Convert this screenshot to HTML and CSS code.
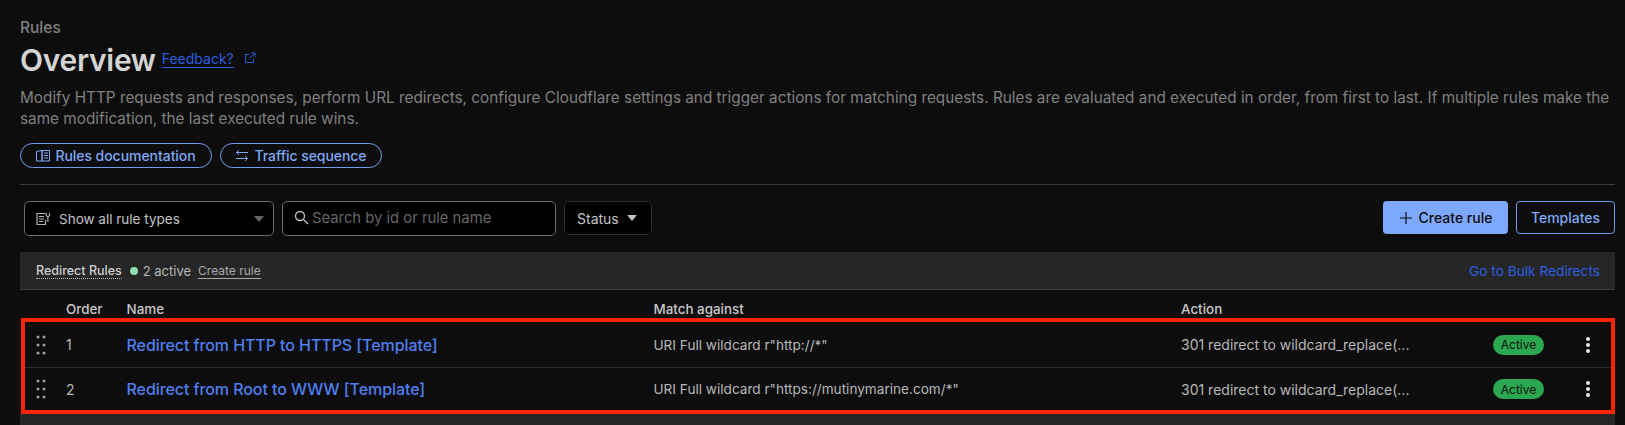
FILE: index.html
```html
<!DOCTYPE html>
<html lang="en">
<head>
  <meta charset="UTF-8">
  <meta name="viewport" content="width=device-width, initial-scale=1.0">
  <title>Rules Overview</title>
  <link rel="stylesheet" href="styles.css">
</head>
<body>
  <div class="container">
    <div class="crumb">Rules</div>
    <div class="title-row">
      <h1>Overview</h1>
      <a class="feedback" href="#">Feedback?</a>
      <svg class="ext-icon" width="12" height="12" viewBox="0 0 12 12" fill="none" stroke="currentColor" stroke-width="1">
        <path d="M5 2.5H1.5V10.5H9.5V7"/>
        <path d="M7 1H11V5M11 1L5.5 6.5"/>
      </svg>
    </div>
    <p class="intro">Modify HTTP requests and responses, perform URL redirects, configure Cloudflare settings and trigger actions for matching requests. Rules are evaluated and executed in order, from first to last. If multiple rules make the same modification, the last executed rule wins.</p>

    <div class="pills">
      <a class="pill pill-docs" href="#">
        <svg width="14" height="13" viewBox="0 0 14 13" fill="none" stroke="currentColor" stroke-width="1">
          <path d="M.5 2.5L6 1.5V12L.5 12ZM6 1.5H13.5V12H6Z"/>
          <path d="M8 4H12M8 6.5H12M8 9H12"/>
        </svg>
        Rules documentation
      </a>
      <a class="pill pill-traffic" href="#">
        <svg width="14" height="13" viewBox="0 0 14 13" fill="none" stroke="currentColor" stroke-width="1">
          <path d="M13 3.5H1.5M4 1L1.5 3.5L4 6"/>
          <path d="M1 9.5H12.5M10 7L12.5 9.5L10 12"/>
        </svg>
        Traffic sequence
      </a>
    </div>

    <hr class="divider">

    <div class="toolbar">
      <div class="select">
        <svg width="15" height="14" viewBox="0 0 15 14" fill="none" stroke="currentColor" stroke-width="1.2">
          <path d="M9.5 1.5H1V12.5H9.5V8"/>
          <path d="M3 4.5H8M3 7H8M3 9.5H7"/>
          <path d="M10.3 1V3.6L11.9 5L13.5 3.6V1M11.9 5V10"/>
        </svg>
        <span class="select-text">Show all rule types</span>
        <span class="caret caret-dim"></span>
      </div>
      <div class="search">
        <svg width="15" height="15" viewBox="0 0 15 15" fill="none" stroke="currentColor" stroke-width="1.3">
          <circle cx="6" cy="6" r="4.5"/>
          <path d="M9.5 9.5L14 14"/>
        </svg>
        <span>Search by id or rule name</span>
      </div>
      <div class="status">
        Status
        <span class="caret"></span>
      </div>
      <div class="toolbar-right">
        <a class="btn btn-primary" href="#">
          <svg width="14" height="14" viewBox="0 0 14 14" stroke="currentColor" stroke-width="1.2">
            <path d="M7 1V13M1 7H13"/>
          </svg>
          Create rule
        </a>
        <a class="btn btn-outline" href="#">Templates</a>
      </div>
    </div>

    <div class="section-head">
      <span class="section-name">Redirect Rules</span>
      <span class="dot"></span>
      <span class="section-count">2 active</span>
      <a class="section-create" href="#">Create rule</a>
      <a class="bulk-link" href="#">Go to Bulk Redirects</a>
    </div>

    <div class="grid-row table-head">
      <span></span>
      <span>Order</span>
      <span>Name</span>
      <span>Match against</span>
      <span>Action</span>
    </div>

    <div class="highlight">
      <div class="grid-row rule">
        <svg class="drag" width="10" height="20" viewBox="0 0 10 20" fill="currentColor">
          <circle cx="2" cy="2" r="1.5"/><circle cx="8" cy="2" r="1.5"/>
          <circle cx="2" cy="10" r="1.5"/><circle cx="8" cy="10" r="1.5"/>
          <circle cx="2" cy="18" r="1.5"/><circle cx="8" cy="18" r="1.5"/>
        </svg>
        <span>1</span>
        <a class="rule-name" href="#">Redirect from HTTP to HTTPS [Template]</a>
        <span class="match">URI Full wildcard r"http://*"</span>
        <span>301 redirect to wildcard_replace(...</span>
        <span class="badge">Active</span>
        <svg class="more" width="6" height="18" viewBox="0 0 6 18" fill="currentColor">
          <circle cx="3" cy="3" r="2"/><circle cx="3" cy="9" r="2"/><circle cx="3" cy="15" r="2"/>
        </svg>
      </div>
      <div class="grid-row rule">
        <svg class="drag" width="10" height="20" viewBox="0 0 10 20" fill="currentColor">
          <circle cx="2" cy="2" r="1.5"/><circle cx="8" cy="2" r="1.5"/>
          <circle cx="2" cy="10" r="1.5"/><circle cx="8" cy="10" r="1.5"/>
          <circle cx="2" cy="18" r="1.5"/><circle cx="8" cy="18" r="1.5"/>
        </svg>
        <span>2</span>
        <a class="rule-name" href="#">Redirect from Root to WWW [Template]</a>
        <span class="match">URI Full wildcard r"https://mutinymarine.com/*"</span>
        <span>301 redirect to wildcard_replace(...</span>
        <span class="badge">Active</span>
        <svg class="more" width="6" height="18" viewBox="0 0 6 18" fill="currentColor">
          <circle cx="3" cy="3" r="2"/><circle cx="3" cy="9" r="2"/><circle cx="3" cy="15" r="2"/>
        </svg>
      </div>
    </div>
    <div class="section-foot"></div>
  </div>
</body>
</html>
```

FILE: styles.css
```css
body {
  font-family: Inter, "Liberation Sans", sans-serif;
  margin: 0;
  padding: 0;
  background-color: #0d0d0d;
  color: #d9d9d9;
  overflow: hidden;
}
a {
  text-decoration: none;
}
.container {
  padding: 19px 10px 0 20px;
}
.crumb {
  font-size: 15.5px;
  line-height: 17px;
  font-weight: 500;
  color: #808080;
}
.title-row {
  display: flex;
  align-items: center;
  height: 42px;
  margin-top: 3px;
}
h1 {
  margin: 0;
  font-size: 30px;
  font-weight: 600;
  letter-spacing: -0.3px;
  color: #d4d4d4;
}
.feedback {
  margin-left: 6px;
  font-size: 14px;
  line-height: 17px;
  color: #2c5ee0;
  border-bottom: 1px solid #2c5ee0;
  position: relative;
  top: -1px;
}
.ext-icon {
  margin-left: 10px;
  color: #2c5ee0;
  position: relative;
  top: -2px;
}
.intro {
  margin: 6px 0 0;
  font-size: 15.32px;
  line-height: 21px;
  color: #808080;
}
.pills {
  display: flex;
  gap: 8px;
  margin-top: 14px;
}
.pill {
  display: flex;
  align-items: center;
  justify-content: center;
  gap: 5px;
  height: 25px;
  box-sizing: border-box;
  border: 1px solid #6d9eed;
  border-radius: 13px;
  font-size: 14px;
  font-weight: 500;
  letter-spacing: -0.05px;
  color: #7ea9f5;
}
.pill-docs {
  width: 192px;
}
.pill-traffic {
  width: 162px;
}
.divider {
  border: 0;
  border-top: 1px solid #3d3d3d;
  margin: 16px 0 16px;
}
.toolbar {
  display: flex;
  align-items: flex-start;
  gap: 8px;
  padding-left: 4px;
}
.select, .search, .status {
  display: flex;
  align-items: center;
  box-sizing: border-box;
  background-color: #000;
  font-size: 14px;
}
.select {
  width: 250px;
  height: 35px;
  padding: 0 9px 0 11px;
  gap: 8px;
  border: 1px solid #6b6b6b;
  border-radius: 5px;
  font-size: 13.5px;
  color: #c4c4c4;
}
.select svg {
  color: #b0b0b0;
}
.select-text {
  flex: 1;
}
.search {
  width: 274px;
  height: 35px;
  padding: 0 11px 2px;
  gap: 3px;
  border: 1px solid #6b6b6b;
  border-radius: 5px;
  font-size: 14.8px;
  color: #666;
}
.search svg {
  color: #c4c4c4;
}
.status {
  width: 88px;
  height: 34px;
  padding: 0 12px;
  gap: 8px;
  border: 1px solid #2e2e2e;
  border-radius: 5px;
  color: #c4c4c4;
}
.caret {
  width: 0;
  height: 0;
  border-left: 5.5px solid transparent;
  border-right: 5.5px solid transparent;
  border-top: 6px solid #c4c4c4;
}
.caret-dim {
  border-top-color: #666;
}
.toolbar-right {
  margin-left: auto;
  display: flex;
  gap: 8px;
}
.btn {
  display: flex;
  align-items: center;
  justify-content: center;
  box-sizing: border-box;
  height: 33px;
  border-radius: 4px;
  font-size: 14px;
  font-weight: 500;
}
.btn-primary {
  width: 125px;
  gap: 6px;
  background-color: #7da8fb;
  color: #0d0d0d;
}
.btn-outline {
  width: 99px;
  border: 1px solid #6d9eed;
  color: #7ea9f5;
}
.section-head {
  display: flex;
  align-items: center;
  box-sizing: border-box;
  height: 38px;
  margin-top: 16px;
  padding: 0 15px 0 16px;
  background-color: #262626;
  border-bottom: 1px solid #3d3d3d;
  font-size: 13px;
  color: #b8b8b8;
}
.section-name {
  font-size: 12.5px;
  font-weight: 500;
  color: #d0d0d0;
  border-bottom: 1px dotted #b8b8b8;
}
.dot {
  width: 8px;
  height: 8px;
  margin: 0 5px 0 8px;
  border-radius: 50%;
  background-color: #8fe0b0;
}
.section-create {
  margin-left: 7px;
  font-size: 12px;
  color: #a8a8a8;
  border-bottom: 1px solid #a8a8a8;
}
.bulk-link {
  margin-left: auto;
  font-size: 13.7px;
  color: #2c5ee0;
}
.grid-row {
  display: grid;
  grid-template-columns: 46px 60.5px 527px 527.5px 312px 77px 1fr;
  align-items: center;
  font-size: 14px;
}
.table-head {
  box-sizing: border-box;
  height: 28px;
  padding-top: 9px;
  font-size: 13.4px;
  font-weight: 500;
  color: #c8c8c8;
}
.highlight {
  border: 4px solid #fa2408;
  margin-left: 1px;
  background-color: #0d0d0d;
}
.rule {
  grid-template-columns: 41px 60.5px 527px 527.5px 312px 77px 1fr;
  box-sizing: border-box;
  height: 45px;
  color: #b8b8b8;
}
.rule + .rule {
  height: 43px;
  border-top: 1px solid #2e2e2e;
}
.drag {
  margin-left: 11px;
  color: #a0a0a0;
}
.rule-name {
  font-size: 16px;
  font-weight: 500;
  letter-spacing: -0.08px;
  color: #4f7ff0;
}
.match {
  font-size: 13.6px;
}
.badge {
  display: flex;
  align-items: center;
  justify-content: center;
  width: 51px;
  height: 20px;
  border-radius: 10px;
  background-color: #2ba84f;
  font-size: 12px;
  color: #0d0d0d;
}
.more {
  color: #e8e8e8;
  margin-left: 15px;
}
.section-foot {
  height: 11px;
  background-color: #262626;
}
```
